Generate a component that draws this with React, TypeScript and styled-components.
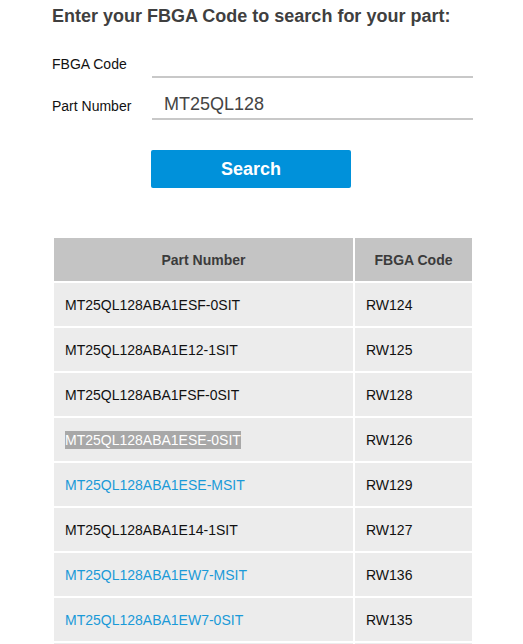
import React from "react";
import styled, { createGlobalStyle } from "styled-components";

const Global = createGlobalStyle`
  html, body { margin: 0; padding: 0; background: #fff; }
  body { font-family: "Liberation Sans", Arial, Helvetica, sans-serif; }
`;

const Page = styled.div`
  padding: 6px 0 0 52px;
`;

const Title = styled.h2`
  margin: 0;
  font-size: 18px;
  line-height: 21px;
  font-weight: 700;
  color: #3f3f3f;
`;

const Form = styled.div`
  margin-top: 9px;
  display: flex;
  flex-direction: column;
`;

const FieldRow = styled.div`
  display: grid;
  grid-template-columns: 100px 321px;
  align-items: end;
  height: 42px;
`;

const Label = styled.label`
  font-size: 14px;
  color: #111;
  padding-bottom: 6px;
  line-height: 16px;
`;

const Input = styled.div`
  border-bottom: 2px solid #c8c8c8;
  font-size: 18px;
  color: #444;
  padding-left: 12px;
  display: flex;
  align-items: flex-end;
  padding-bottom: 4px;
  box-sizing: border-box;
  height: 42px;
  line-height: 20px;
`;

const Button = styled.button`
  margin: 30px 0 0 99px;
  width: 200px;
  height: 38px;
  border: none;
  border-radius: 2px;
  background: #0091da;
  color: #fff;
  font-family: "Liberation Sans", Arial, sans-serif;
  font-size: 18px;
  font-weight: 700;
  padding: 0;
`;

const Table = styled.table`
  margin-top: 48px;
  border-spacing: 2px;
  border-collapse: separate;
  width: 422px;
`;

const Th = styled.th<{ $w: number }>`
  width: ${(p) => p.$w}px;
  height: 43px;
  padding: 0;
  background: #c4c4c4;
  color: #3b3b3b;
  font-size: 14px;
  font-weight: 700;
  text-align: center;
`;

const Td = styled.td`
  height: 43px;
  padding: 0 0 0 11px;
  background: #ececec;
  color: #111;
  font-size: 14px;
`;

const PartLink = styled.span<{ $link?: boolean; $sel?: boolean }>`
  color: ${(p) => (p.$sel ? "#fff" : p.$link ? "#1a9ad8" : "#111")};
  background: ${(p) => (p.$sel ? "#a8a8a8" : "transparent")};
  padding: ${(p) => (p.$sel ? "1px 0" : "0")};
`;

const rows: { part: string; code: string; link?: boolean; sel?: boolean }[] = [
  { part: "MT25QL128ABA1ESF-0SIT", code: "RW124" },
  { part: "MT25QL128ABA1E12-1SIT", code: "RW125" },
  { part: "MT25QL128ABA1FSF-0SIT", code: "RW128" },
  { part: "MT25QL128ABA1ESE-0SIT", code: "RW126", sel: true },
  { part: "MT25QL128ABA1ESE-MSIT", code: "RW129", link: true },
  { part: "MT25QL128ABA1E14-1SIT", code: "RW127" },
  { part: "MT25QL128ABA1EW7-MSIT", code: "RW136", link: true },
  { part: "MT25QL128ABA1EW7-0SIT", code: "RW135", link: true },
  { part: "", code: "" },
];

export default function App() {
  return (
    <Page>
      <Global />
      <Title>Enter your FBGA Code to search for your part:</Title>
      <Form>
        <FieldRow>
          <Label>FBGA Code</Label>
          <Input />
        </FieldRow>
        <FieldRow>
          <Label>Part Number</Label>
          <Input>MT25QL128</Input>
        </FieldRow>
      </Form>
      <Button>Search</Button>
      <Table>
        <thead>
          <tr>
            <Th $w={299}>Part Number</Th>
            <Th $w={117}>FBGA Code</Th>
          </tr>
        </thead>
        <tbody>
          {rows.map((r, i) => (
            <tr key={i}>
              <Td>
                <PartLink $link={r.link} $sel={r.sel}>
                  {r.part}
                </PartLink>
              </Td>
              <Td>{r.code}</Td>
            </tr>
          ))}
        </tbody>
      </Table>
    </Page>
  );
}
